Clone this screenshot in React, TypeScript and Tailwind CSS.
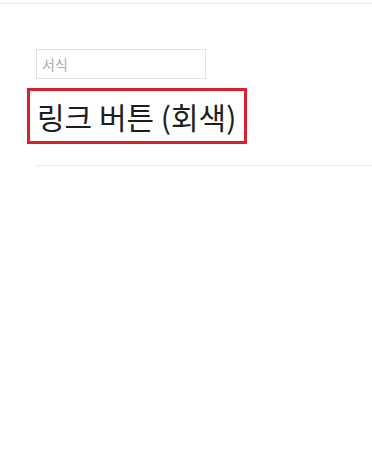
export default function App() {
  return (
    <div className="min-h-screen bg-white" style={{ fontFamily: '"Noto Sans CJK KR", "Noto Sans", sans-serif' }}>
      <div className="mt-[3px] border-t border-[#ececec]">
        <div className="pl-9 pt-[45px]">
          <input
            type="text"
            placeholder="서식"
            className="block h-[30px] w-[170px] border border-[#e3e3e3] px-[5px] text-[14px] text-[#333] placeholder:text-[#aaa] outline-none"
          />
          <div className="-ml-[9px] mt-[9px] flex h-[56px] w-[220px] items-center border-[3px] border-[#d7212c] pl-[7px]">
            <h1 className="text-[30px] leading-none text-[#1e1e1e]">링크 버튼 (회색)</h1>
          </div>
          <div className="mt-[21px] border-t border-[#ececec]" />
        </div>
      </div>
    </div>
  );
}
